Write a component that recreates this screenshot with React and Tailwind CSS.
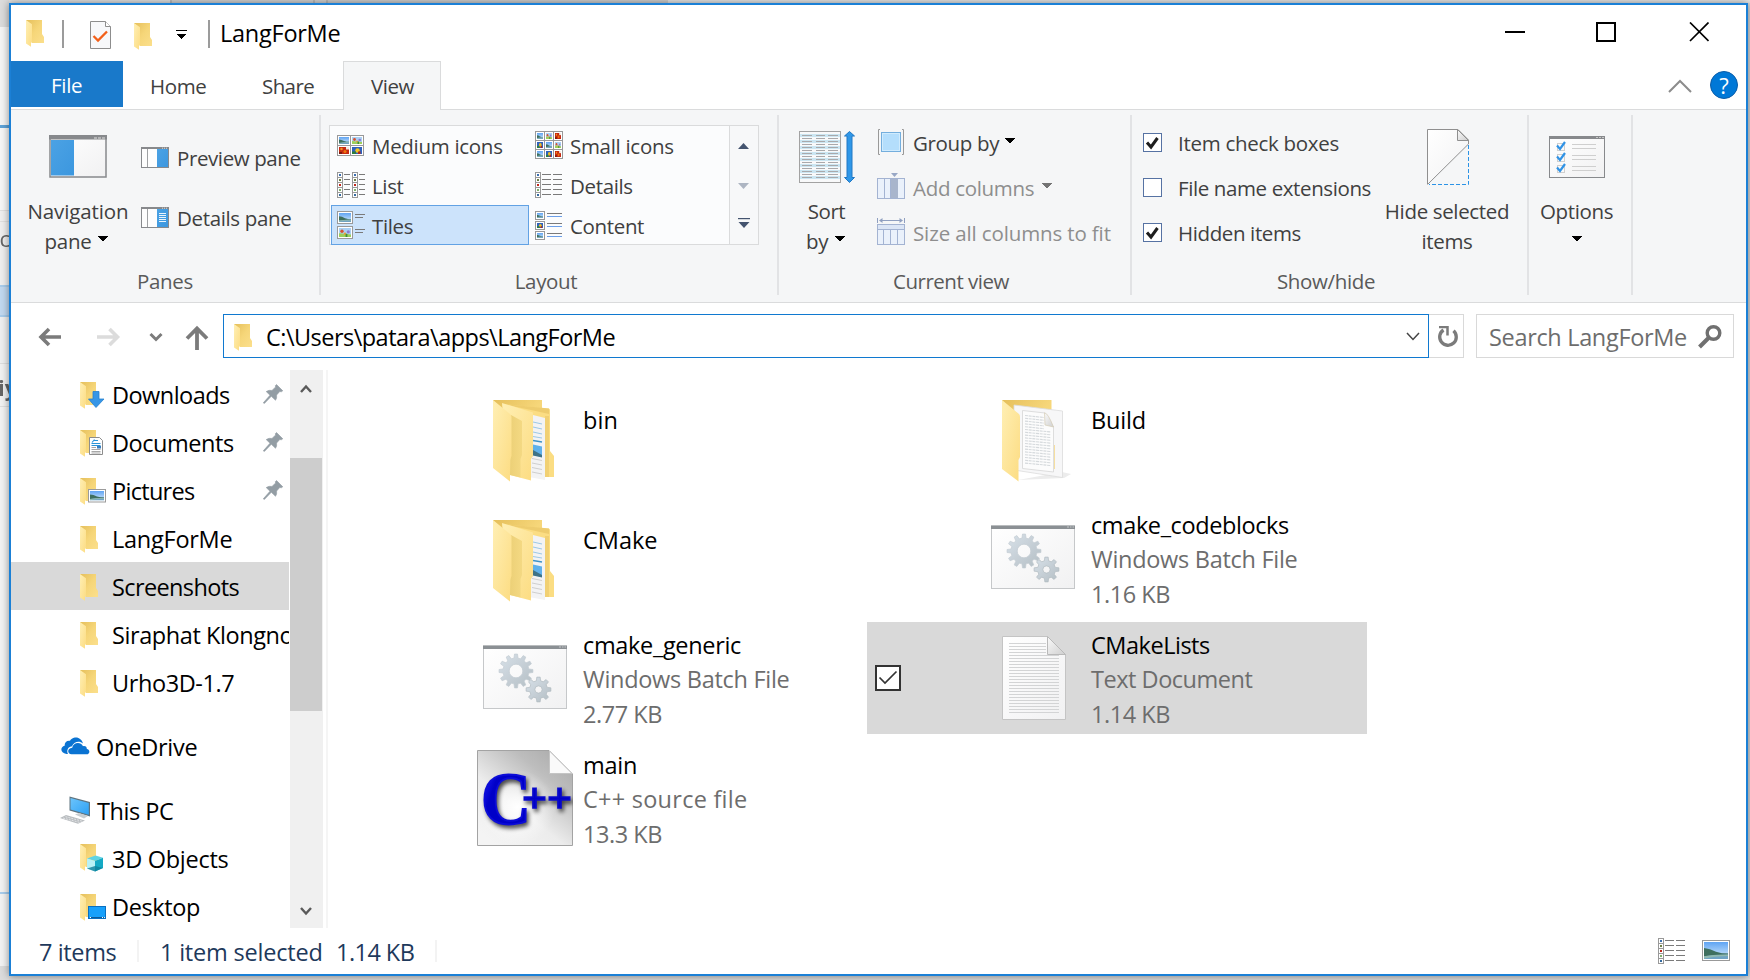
import React from 'react';

/* ---------- shared drawing pieces ---------- */

function Defs() {
  return (
    <svg width="0" height="0" className="absolute">
      <defs>
        <linearGradient id="fBack" x1="0" y1="0" x2="1" y2="1">
          <stop offset="0" stopColor="#e5bf5b" />
          <stop offset="0.5" stopColor="#f6d679" />
          <stop offset="1" stopColor="#fbdf8c" />
        </linearGradient>
        <linearGradient id="fFront" x1="0" y1="0" x2="1" y2="1">
          <stop offset="0" stopColor="#ffefb4" />
          <stop offset="1" stopColor="#fcdc82" />
        </linearGradient>
        <linearGradient id="fInner" x1="0" y1="0" x2="1" y2="0">
          <stop offset="0" stopColor="#ecd077" />
          <stop offset="1" stopColor="#f4d983" />
        </linearGradient>
        <linearGradient id="paper" x1="0" y1="0" x2="1" y2="1">
          <stop offset="0" stopColor="#ffffff" />
          <stop offset="1" stopColor="#f1f1f2" />
        </linearGradient>
        <linearGradient id="fold" x1="0" y1="0" x2="1" y2="1">
          <stop offset="0" stopColor="#fafafa" />
          <stop offset="1" stopColor="#cfcfcf" />
        </linearGradient>
        <linearGradient id="sky" x1="0" y1="0" x2="0" y2="1">
          <stop offset="0" stopColor="#5fa4f3" />
          <stop offset="1" stopColor="#d9ecfb" />
        </linearGradient>
        <linearGradient id="gear" x1="0" y1="0" x2="1" y2="1">
          <stop offset="0" stopColor="#d8e1e9" />
          <stop offset="1" stopColor="#b4bec4" />
        </linearGradient>
        <linearGradient id="blueBar" x1="0" y1="0" x2="1" y2="1">
          <stop offset="0" stopColor="#4ba2e4" />
          <stop offset="1" stopColor="#3c97df" />
        </linearGradient>
        <linearGradient id="screen" x1="0" y1="0" x2="1" y2="1">
          <stop offset="0" stopColor="#6cc4fb" />
          <stop offset="1" stopColor="#2da1f5" />
        </linearGradient>
        <linearGradient id="cppPage" x1="1" y1="0" x2="0.2" y2="1">
          <stop offset="0" stopColor="#a6a6a6" />
          <stop offset="0.3" stopColor="#bdbdbd" />
          <stop offset="0.65" stopColor="#ececec" />
          <stop offset="1" stopColor="#f4f4f4" />
        </linearGradient>
        <radialGradient id="cppGlow" cx="0.42" cy="0.6" r="0.4">
          <stop offset="0" stopColor="#ffffff" />
          <stop offset="1" stopColor="#ffffff" stopOpacity="0" />
        </radialGradient>
        <linearGradient id="cppInk" x1="0" y1="0" x2="0.35" y2="0.2">
          <stop offset="0" stopColor="#7a7aff" />
          <stop offset="0.6" stopColor="#1212e6" />
          <stop offset="1" stopColor="#0000c8" />
        </linearGradient>
      </defs>
    </svg>
  );
}

function Scene({ x, y, w, h, kind = 'lake' }) {
  return (
    <svg x={x} y={y} width={w} height={h} viewBox="0 0 20 14" preserveAspectRatio="none">
      {kind === 'lake' && (
        <>
          <rect width="20" height="14" fill="url(#sky)" />
          <rect y="9.5" width="20" height="4.5" fill="#6fa3c4" />
          <path d="M0 5 L5 6 L10 8 L15 9.3 L20 9.5 L20 10.2 L8 10.8 L0 11.8 Z" fill="#3e6f5e" />
          <path d="M0 11.8 L8 10.8 L20 10.2 L20 11.5 L9 12.2 L0 13.5 Z" fill="#8fb8ae" />
        </>
      )}
      {kind === 'flowers' && (
        <>
          <rect width="20" height="14" fill="#a9d0f4" />
          <path d="M0 8 L8 9 L20 10 V14 H0 Z" fill="#9fcf5a" />
          <circle cx="5" cy="5" r="2.800" fill="#d9512f" />
          <circle cx="10" cy="9" r="2" fill="#e9a03c" />
          <circle cx="15.500" cy="6" r="2.600" fill="#8f7bd0" />
          <rect x="11" y="9" width="3" height="5" fill="#3f8f3a" />
        </>
      )}
      {kind === 'red' && (
        <>
          <rect width="20" height="14" fill="#c62a12" />
          <circle cx="5" cy="4" r="2.500" fill="#f3941f" />
          <circle cx="12" cy="9" r="3" fill="#f0780f" />
          <rect x="14" y="0" width="6" height="5" fill="#f6e9e0" />
          <rect x="0" y="10" width="6" height="4" fill="#7c1b0e" />
        </>
      )}
      {kind === 'dark' && (
        <>
          <rect width="20" height="14" fill="#2f62bd" />
          <circle cx="11" cy="7" r="4.500" fill="#f1c21f" />
          <rect x="0" y="9" width="8" height="5" fill="#2d7d3d" />
          <rect x="12" y="9" width="5" height="5" fill="#b3261a" />
        </>
      )}
    </svg>
  );
}

const Caret = ({ className = 'text-black' }) => (
  <svg width="10" height="5" viewBox="0 0 10 5" className={className} shapeRendering="crispEdges">
    <path d="M0 0 H10 L5.600 5 H4.400 Z" fill="currentColor" />
  </svg>
);

/* ---------- small icons ---------- */

function FolderBase() {
  return (
    <>
      <path d="M0 0 H16 V14 L18 17 V23 H6 Z" fill="url(#fBack)" />
      <path d="M0 0 L6 4.300 V22 L5 23 V26.700 L0 23.500 Z" fill="url(#fFront)" />
    </>
  );
}

function FolderIcon({ kind }) {
  return (
    <svg width="28" height="28" viewBox="0 0 28 28">
      <FolderBase />
      {kind === 'down' && (
        <path d="M13 9.500 H19 V17 H24 L16 25.500 L8.500 17 H13 Z" fill="#3796e6" stroke="#2480cf" strokeWidth="0.800" />
      )}
      {kind === 'doc' && (
        <g>
          <path d="M9.500 7.500 H19.500 L22.500 10.500 V24.500 H9.500 Z" fill="#fff" stroke="#8d8d8d" />
          <path d="M12 12.500 L14.500 9.500 M14 10.500 H18 M11.500 13.500 H20.500 M11.500 15.500 H20.500" stroke="#2a94d8" strokeWidth="1.100" />
          <path d="M11.500 17.500 H16 M11.500 19.500 H20.500 M11.500 21.500 H20.500 M11.500 23 H20.500" stroke="#9d9d9d" strokeWidth="0.900" />
          <rect x="17" y="16" width="4" height="2.500" fill="#3b7fc0" />
        </g>
      )}
      {kind === 'pic' && (
        <g>
          <rect x="8.500" y="11.500" width="17" height="12.500" fill="#fff" stroke="#9b9b9b" />
          <Scene x="10" y="13" w="14" h="9.500" />
        </g>
      )}
      {kind === '3d' && (
        <g>
          <path d="M7 14.500 L15.500 11.500 L23 13.800 L15 17 Z" fill="#5fd3e4" />
          <path d="M7 14.500 L15 17 V27.500 L7 24.500 Z" fill="#b8f1f6" />
          <path d="M15 17 L23 13.800 V24 L15 27.500 Z" fill="#14a9c4" />
          <path d="M7 24.500 L15 22 L23 24 L15 27.500 Z" fill="#0b7f9b" opacity="0.800" />
        </g>
      )}
      {kind === 'desk' && (
        <g>
          <rect x="8.500" y="12.500" width="17" height="12" fill="#17a0fb" stroke="#0a6fc0" />
          <path d="M10 23.500 H24" stroke="#0c5a99" />
          <path d="M10 23.500 h1 M22 23.500 h1 M24 23.500 h0.800" stroke="#fff" />
        </g>
      )}
    </svg>
  );
}

const Pin = () => (
  <svg width="20" height="20" viewBox="0 0 20 20">
    <path d="M13.500 0.500 L19.800 6.800 L18.300 7.800 L16.800 7.500 L13.600 11 Q14.200 14.300 12.500 16.300 L8.300 12.300 L1.300 19.600 L0.300 18.800 L7 11.200 L3.200 7.600 Q6 5.700 9 6.400 L12.600 3 L12.300 1.700 Z" fill="#939da4" stroke="#939da4" strokeWidth="0.600" />
  </svg>
);

const OneDrive = () => (
  <svg width="29" height="18" viewBox="0 0 29 18">
    <path d="M5.500 17 H7 C5 13.500 7.500 9.500 11 9.300 C12.500 5 18 3.200 22 6.500 C21 2.500 17.500 0 13.800 0.600 C11.500 1 10 2.300 9 3.800 C5.500 3.300 3.300 6 3.700 8.800 C-1.200 10 -0.800 16.500 5.500 17 Z" fill="#0a73d2" />
    <path d="M10.500 17.300 C6 17 6 11 11.200 10.700 C12 5.500 19.500 4 22 9.200 C25 8.700 26 10.600 25.800 12 C29.500 12.500 29 17.300 25.500 17.300 Z" fill="#0a73d2" />
  </svg>
);

const ThisPC = () => (
  <svg width="31" height="28" viewBox="0 0 31 28">
    <path d="M9.500 0.500 L30 6 V20.500 L9.500 14.500 Z" fill="#5e7480" />
    <path d="M10.500 2 L28.800 6.900 V18.800 L10.500 13.600 Z" fill="url(#screen)" />
    <path d="M15 18.500 L19 17 L28 20 L24 22.500 Z" fill="#c9ced1" />
    <path d="M0 22 L6 19 L25 24.500 L18 27.800 Z" fill="#b9bdc0" />
    <path d="M3 22 L20 26.500 M5.500 20.700 L22.500 25.300" stroke="#e6e8ea" strokeWidth="0.900" strokeDasharray="2 1" />
  </svg>
);

function PaneIcon({ lines }) {
  return (
    <svg width="28" height="21" viewBox="0 0 28 21">
      <rect x="0.500" y="0.500" width="27" height="20" fill="#fdfdfd" stroke="#87898c" />
      <rect width="28" height="2" fill="#87898c" />
      <path d="M21 1.200 h5" stroke="#dcdcdc" strokeDasharray="1 1" />
      <path d="M6.500 2 V20" stroke="#9fa1a3" />
      <rect x="16" y="2" width="11" height="18" fill="url(#blueBar)" />
      {lines && <path d="M18 6.500 H25 M18 8.500 H25 M18 10.500 H25 M18 12.500 H25 M18 14.500 H25" stroke="#fff" strokeWidth="0.900" />}
    </svg>
  );
}

const MediumIcons = () => (
  <svg width="28" height="21" viewBox="0 0 28 21">
    <rect x="0.500" y="0.500" width="26" height="20" fill="#fff" stroke="#999" />
    <path d="M13.500 0 V21 M0 10.500 H27" stroke="#999" />
    <Scene x="2" y="2" w="10" h="7" />
    <Scene x="15" y="2" w="10" h="7" kind="flowers" />
    <Scene x="2" y="12" w="10" h="7" kind="red" />
    <Scene x="15" y="12" w="10" h="7" kind="dark" />
  </svg>
);

const SMALL_KINDS = ['lake', 'flowers', 'red', 'dark', 'lake', 'flowers', 'lake', 'dark', 'red'];
const SmallIcons = () => (
  <svg width="28" height="28" viewBox="0 0 28 28">
    <rect x="0.500" y="0.500" width="27" height="27" fill="#fff" stroke="#999" />
    <path d="M9.500 0 V28 M18.500 0 V28 M0 9.500 H28 M0 18.500 H28" stroke="#999" />
    {SMALL_KINDS.map((k, i) => (
      <Scene key={i} x={2 + (i % 3) * 9} y={2 + Math.floor(i / 3) * 9} w="6" h="6" kind={k} />
    ))}
  </svg>
);

const DOTS = ['#3b6fb0', '#6e7f45', '#c0281c', '#7eaf6a', '#356b9f'];
function Strip({ x }) {
  return (
    <g>
      <rect x={x + 0.5} y="0.500" width="5" height="25" fill="#fff" stroke="#999" />
      {DOTS.map((c, i) => (
        <g key={i}>
          <rect x={x + 2} y={2 + i * 5} width="2" height="2" fill={c} />
          {i > 0 && <path d={`M${x} ${i * 5 + 0.5} h6`} stroke="#999" />}
        </g>
      ))}
    </g>
  );
}
const ListIcon = () => (
  <svg width="28" height="26" viewBox="0 0 28 26">
    <Strip x={0} />
    <Strip x={15} />
    <path d="M7 2.500 h6 M7 7.500 h6 M7 12.500 h6 M7 17.500 h6 M7 22.500 h6 M22 2.500 h6 M22 7.500 h6 M22 12.500 h6 M22 17.500 h6 M22 22.500 h6" stroke="#7a7a7a" />
  </svg>
);
const DetailsIcon = () => (
  <svg width="28" height="26" viewBox="0 0 28 26">
    <Strip x={0} />
    <path d="M7 2.500 h9 M7 7.500 h9 M7 12.500 h9 M7 17.500 h9 M7 22.500 h9 M18 2.500 h9 M18 7.500 h9 M18 12.500 h9 M18 17.500 h9 M18 22.500 h9" stroke="#7a7a7a" />
  </svg>
);
const TilesIcon = () => (
  <svg width="28" height="28" viewBox="0 0 28 28">
    <rect x="0.500" y="0.500" width="15" height="12" fill="#fff" stroke="#999" />
    <rect x="0.500" y="15.500" width="15" height="12" fill="#fff" stroke="#999" />
    <Scene x="2" y="2" w="12" h="9" />
    <Scene x="2" y="17" w="12" h="9" kind="flowers" />
    <path d="M18 3.500 h10 M18 6.500 h8 M18 18.500 h10 M18 21.500 h8" stroke="#7a7a7a" />
  </svg>
);
const ContentIcon = () => (
  <svg width="28" height="29" viewBox="0 0 28 29">
    {[0, 1, 2].map((i) => (
      <g key={i}>
        <rect x="0.500" y={0.5 + i * 10} width="9" height="8" fill="#fff" stroke="#999" />
        <Scene x="2" y={2 + i * 10} w="6" h="5" kind={i === 1 ? 'dark' : 'lake'} />
        <path d={`M12 ${2.5 + i * 10} h15`} stroke="#7a7a7a" />
        <path d={`M12 ${5.5 + i * 10} h15`} stroke="#6c9fe8" />
      </g>
    ))}
  </svg>
);

/* ---------- large ribbon icons ---------- */

const NavPaneIcon = () => (
  <svg width="58" height="43" viewBox="0 0 58 43">
    <rect x="1" y="1" width="56" height="41" fill="url(#paper)" stroke="#87898c" strokeWidth="1.500" />
    <rect width="58" height="4.500" fill="#87898c" />
    <path d="M45 3 h3 M49 3 h3 M53 3 h3" stroke="#c4c4c4" strokeWidth="1.500" />
    <rect x="2" y="5" width="23" height="35.500" fill="url(#blueBar)" />
  </svg>
);

const SortIcon = () => (
  <svg width="56" height="52" viewBox="0 0 56 52">
    <rect x="0.500" y="0.500" width="41" height="51" fill="#f8f9fa" stroke="#a2a2a2" />
    {[2, 8, 14, 20, 26, 32, 38, 44].map((y) => (
      <rect key={y} x="1" y={y + 1} width="40" height="3" fill="#cbe6f2" />
    ))}
    {Array.from({ length: 15 }, (_, i) => (
      <path key={i} d={`M3 ${4.5 + i * 3} h10 M17 ${4.5 + i * 3} h9 M29 ${4.5 + i * 3} h10`} stroke="#a9a9ab" strokeWidth="1" />
    ))}
    <path d="M50.500 0.500 L55.500 5 H53 V46.500 H55.500 L50.500 51.500 L45.500 46.500 H48 V5 H45.500 Z" fill="#2f97e8" stroke="#2278c4" />
  </svg>
);

const GroupIcon = () => (
  <svg width="28" height="27" viewBox="0 0 28 27">
    <path d="M3 0.500 H1.500 V25.500 H3 M25 0.500 H26.500 V25.500 H25" fill="none" stroke="#999" />
    <rect x="4.500" y="3.500" width="19" height="19" fill="#b4defc" stroke="#74aedd" />
    <rect x="5.500" y="4.500" width="17" height="17" fill="none" stroke="#d0ebfd" />
  </svg>
);
const AddColIcon = () => (
  <svg width="28" height="26" viewBox="0 0 28 26">
    <rect x="0.500" y="5.500" width="27" height="20" fill="#eaf1fb" stroke="#a3b3d2" />
    <path d="M7.500 5 V26 M13.500 5 V26 M20.500 5 V26" stroke="#a3b3d2" />
    <rect x="14" y="6" width="7" height="19" fill="#a8b5cc" />
    <path d="M14 0 H21 L17.500 4 Z" fill="#98a7c5" />
  </svg>
);
const SizeColIcon = () => (
  <svg width="28" height="27" viewBox="0 0 28 27">
    <path d="M0.500 0 V5 M27.500 0 V5" stroke="#8f9fc0" />
    <path d="M4 2.500 H24" stroke="#8f9fc0" />
    <path d="M2 2.500 L5.500 0 V5 Z M26 2.500 L22.500 0 V5 Z" fill="#8f9fc0" />
    <rect x="0.500" y="6.500" width="27" height="20" fill="#eaf1fb" stroke="#a3b3d2" />
    <rect x="1" y="7" width="26" height="4" fill="#dbe5f5" />
    <path d="M0 11.500 H28 M6.500 11.500 V26 M13.500 11.500 V26 M20.500 11.500 V26" stroke="#a3b3d2" />
  </svg>
);

const HideIcon = () => (
  <svg width="42" height="56" viewBox="0 0 42 56">
    <path d="M0.500 55 V0.500 H31 L41.500 11 V15 L0.500 55.500" fill="url(#paper)" stroke="#8f8f8f" />
    <path d="M30.500 0.500 V11.500 H41.500 Z" fill="url(#fold)" stroke="#8f8f8f" />
    <path d="M41.500 16 V55.500 H2" fill="none" stroke="#2b93e6" strokeDasharray="4 2" />
  </svg>
);

const OptionsIcon = () => (
  <svg width="56" height="42" viewBox="0 0 56 42">
    <rect x="0.500" y="0.500" width="55" height="41" fill="url(#paper)" stroke="#87898c" />
    <rect width="56" height="3" fill="#87898c" />
    <path d="M47 1.500 h2 M50 1.500 h2 M53 1.500 h2" stroke="#c8c8c8" />
    {[0, 11, 22].map((y) => (
      <g key={y}>
        <rect x="8.500" y={7.5 + y} width="7" height="7" fill="#fafafa" stroke="#cfcfcf" />
        <path d={`M8 ${9.5 + y} l3 3.500 l5 -7`} fill="none" stroke="#3093e6" strokeWidth="2.200" />
        <path d={`M23 ${8.5 + y} h24 M23 ${12.5 + y} h24`} stroke="#cfcfcf" />
      </g>
    ))}
  </svg>
);

/* ---------- file icons ---------- */

function gearPath(cx, cy, ro, ri, n) {
  const pts = [];
  const step = (Math.PI * 2) / n;
  for (let i = 0; i < n; i++) {
    const a = i * step - Math.PI / 2;
    [[-0.3, ri], [-0.17, ro], [0.17, ro], [0.3, ri]].forEach(([k, r]) => {
      pts.push(`${(cx + r * Math.cos(a + k * step)).toFixed(2)} ${(cy + r * Math.sin(a + k * step)).toFixed(2)}`);
    });
  }
  return `M${pts.join('L')}Z`;
}
const ring = (cx, cy, r) => `M${cx - r} ${cy}a${r} ${r} 0 1 0 ${2 * r} 0a${r} ${r} 0 1 0 ${-2 * r} 0Z`;
const BIG_GEAR = gearPath(33, 26, 17, 13, 12) + ring(33, 26, 6.8);
const SMALL_GEAR = gearPath(55.5, 44.5, 12.5, 9, 8) + ring(55.5, 44.5, 3.6);

const BatchIcon = () => (
  <svg width="84" height="64" viewBox="0 0 84 64" className="-mt-[2px]">
    <rect x="0.500" y="0.500" width="83" height="63" fill="url(#paper)" stroke="#c6c8ca" />
    <rect width="84" height="4" fill="#8b9094" />
    <rect width="84" height="1" fill="#b9bcbe" />
    <path d="M76 2 h2 M79 2 h1.500 M81.500 2 h1.500" stroke="#c3c6c8" />
    <path d={BIG_GEAR} fill="url(#gear)" stroke="#c3ccd2" strokeWidth="0.700" fillRule="evenodd" />
    <path d={SMALL_GEAR} fill="url(#gear)" stroke="#b0bac0" strokeWidth="0.700" fillRule="evenodd" />
  </svg>
);

const FolderFull = () => (
  <svg width="62" height="82" viewBox="0 0 62 82" className="-ml-[2px] mt-[6px]">
    <path d="M0 0 H49 V60 H10 Z" fill="url(#fBack)" />
    <path d="M9 4 L56 8.500 Q57 9 57 10 V51 L61 56 V77 L52 77 L20 60 Z" fill="#fbdd83" />
    <path d="M9 4 L56 8.500 L56 14 L38 10 Z" fill="#e8c565" opacity="0.700" />
    <path d="M36 14 L52 18 V80 L36 77 Z" fill="#f3f3f4" />
    <path d="M52 16 L56 16 V77 H52 Z" fill="#ecca6d" opacity="0.700" />
    <path d="M40 22 L49 24 M40 27 L49 29 M40 32 L49 34 M40 36.500 L49 38" stroke="#9cc8e6" />
    <path d="M40 40.500 L49 42" stroke="#3d93c9" strokeWidth="1.300" />
    <path d="M40 44.500 L49 46.500 V57 L40 55 Z" fill="#5fb0ea" />
    <path d="M40 50 L49 55 V57.500 L40 55.500 Z" fill="#3f7386" />
    <path d="M39 58.500 L49 60.500 M39 63 L49 65 M39 67.500 L49 69.500 M39 72 L49 74" stroke="#cfcfcf" />
    <path d="M9 3 L40 12.500 V56 L38 59 V80.500 L17 75 Z" fill="url(#fFront)" />
    <path d="M18 15 L29 21 V55 L27.500 59 V77.500 L17 75 Z" fill="url(#fInner)" />
    <path d="M0 0 L17 14 Q18.500 15 18.500 17 V56 L17 60 V81.500 L0 68 Z" fill="url(#fFront)" />
  </svg>
);

const FolderPages = () => (
  <svg width="70" height="82" viewBox="0 0 70 82" className="ml-[8px] mt-[6px]">
    <path d="M16 80 L62 78 L69 74 L60 72 Z" fill="#ececec" />
    <path d="M0 0 H49.500 V60 H10 Z" fill="url(#fBack)" />
    <path d="M12 5 L60.500 11 V77.500 L12 70 Z" fill="#f7f7f8" stroke="#dcdcdc" strokeWidth="0.800" />
    <path d="M20.500 10.500 L43 13 L51.500 27 V72 L20.500 68.500 Z" fill="#fcfcfc" stroke="#d6d6d6" strokeWidth="0.800" />
    {Array.from({ length: 18 }, (_, i) => (
      <path key={i} d={`M23 ${15.5 + i * 2.8} L${i < 5 ? 42 : 49} ${(i < 5 ? 17.5 : 18) + i * 2.8}`} stroke="#d5d9dc" strokeWidth="1.100" strokeDasharray="3 0.700" />
    ))}
    <path d="M42.500 12.800 Q46 13 51.500 27 L43 25 Z" fill="url(#fold)" stroke="#d4cbb4" strokeWidth="0.700" />
    <path d="M52.500 45 V69" stroke="#f6dfa0" />
    <path d="M0 0 L17 14 Q18 15 18 17 V57 L16.500 60 V81.500 L0 69 Z" fill="url(#fFront)" />
  </svg>
);

const TextIcon = () => (
  <svg width="64" height="84" viewBox="0 0 64 84" className="ml-[1px]">
    <path d="M0.500 0.500 H45 L63.500 18.500 V83.500 H0.500 Z" fill="url(#paper)" stroke="#c4c4c4" />
    {Array.from({ length: 24 }, (_, i) => (
      <path key={i} d={`M7 ${7.5 + i * 3} H${i < 4 ? 44 : 57}`} stroke="#d3d4d5" />
    ))}
    <path d="M45.500 0.500 V18.500 H63.500 Z" fill="url(#fold)" stroke="#b9b9b9" />
  </svg>
);

const CppIcon = () => (
  <svg width="96" height="96" viewBox="0 0 96 96">
    <path d="M0.500 0.500 H72 L95.500 24 V95.500 H0.500 Z" fill="url(#cppPage)" stroke="#a3a3a3" />
    <rect x="1" y="1" width="94" height="94" fill="url(#cppGlow)" />
    <path d="M72.500 1 V23.500 H95 Z" fill="#fafafa" stroke="#c4c4c4" />
    <g style={{ filter: 'drop-shadow(2px 3px 2px rgba(0,0,0,0.7))' }} fill="url(#cppInk)" fontFamily="Liberation Serif, serif" fontWeight="700">
      <text x="4" y="74" fontSize="75" textLength="50" lengthAdjust="spacingAndGlyphs" stroke="#0c0cd8" strokeWidth="2">C</text>
      <text x="45" y="61.500" fontSize="42" textLength="50" lengthAdjust="spacingAndGlyphs" stroke="#0808cc" strokeWidth="1.600">++</text>
    </g>
  </svg>
);

/* ---------- window parts ---------- */

function TitleBar() {
  return (
    <div className="flex h-[56px] shrink-0 items-start">
      <div className="ml-[15px] mt-[15px] w-[28px]"><FolderIcon /></div>
      <div className="ml-[8px] mt-[15px] h-[28px] w-[2px] bg-[#9b9b9b]" />
      <svg className="ml-[26px] mt-[16px]" width="21" height="28" viewBox="0 0 21 28">
        <path d="M0.500 0.500 H15.500 L20.500 5.500 V27.500 H0.500 Z" fill="#f7f8fa" stroke="#8d8d8d" />
        <path d="M15.500 0.500 V5.500 H20.500" fill="#fff" stroke="#8d8d8d" />
        <path d="M3.500 15 L8 19.500 L17 10.500" fill="none" stroke="#f2601a" strokeWidth="2.300" />
      </svg>
      <div className="ml-[23px] mt-[18px] w-[28px]"><FolderIcon /></div>
      <svg className="ml-[14px] mt-[25px]" width="11" height="9" viewBox="0 0 11 9" shapeRendering="crispEdges">
        <rect width="11" height="1" fill="#000" />
        <path d="M1 4 H10 L6 9 H5 Z" fill="#000" />
      </svg>
      <div className="ml-[21px] mt-[15px] h-[28px] w-[2px] bg-[#9b9b9b]" />
      <div className="ml-[10px] text-[23.5px] leading-[57px] tracking-[-0.25px] text-black">LangForMe</div>
      <div className="flex-1" />
      <svg className="mt-[17px]" width="204" height="20" viewBox="0 0 204 20" fill="none" stroke="#000" strokeWidth="2">
        <path d="M0 10 H20" />
        <rect x="92" y="1" width="18" height="18" />
        <path d="M185 0.500 L203.500 19 M203.500 0.500 L185 19" strokeWidth="1.700" />
      </svg>
      <div className="w-[37px]" />
    </div>
  );
}

function Tabs() {
  return (
    <div className="flex h-[49px] shrink-0 border-b border-[#dadbdc] text-[20.5px] text-[#404040]">
      <div className="h-[46px] w-[112px] bg-[#1979ca] pl-[40px] leading-[49px] tracking-[-0.3px] text-white">File</div>
      <div className="w-[109px] pl-[27px] leading-[51px] tracking-[-0.4px]">Home</div>
      <div className="w-[111px] pl-[30px] leading-[51px] tracking-[-0.6px]">Share</div>
      <div className="h-[49px] w-[98px] border-x border-t border-[#dadbdc] bg-[#f5f6f7] pl-[27px] leading-[48px] tracking-[-0.5px]">View</div>
      <div className="flex-1" />
      <svg className="mt-[18px]" width="24" height="15" viewBox="0 0 24 15" fill="none" stroke="#8c8c8c" strokeWidth="2">
        <path d="M1 13 L12 2 L23 13" />
      </svg>
      <div className="ml-[18px] mr-[8px] mt-[10px] flex h-[28px] w-[28px] items-center justify-center rounded-full border border-[#0a5ca8] bg-[#0078d7] text-[22px] font-medium leading-none text-white">?</div>
    </div>
  );
}

const Divider = () => <div className="mt-[5px] h-[180px] w-[2px] shrink-0 bg-[#e2e3e5]" />;

function Group({ width, label, labelClass = '', children }) {
  return (
    <div className={`flex shrink-0 flex-col ${width}`}>
      <div className="flex h-[154px]">{children}</div>
      <div className={`text-center leading-[34px] text-[#5a5a5a] ${labelClass}`}>{label}</div>
    </div>
  );
}

function BigButton({ icon, iconPad, width, lines }) {
  return (
    <div className={`flex shrink-0 flex-col items-center ${width}`}>
      <div className={`h-[86px] ${iconPad}`}>{icon}</div>
      {lines.map((l, i) => (
        <div key={i} className="flex h-[30px] items-center gap-[7px] leading-[30px]">{l}</div>
      ))}
    </div>
  );
}

const LiftedCaret = () => <span className="mb-[5px] flex"><Caret /></span>;

function GalleryItem({ icon, label, active, spacing }) {
  return (
    <div className={`flex h-[40px] w-[198px] items-center border pl-[5px] ${active ? 'border-[#62a2e4] bg-[#cce3fb]' : 'border-transparent'}`}>
      <div className="w-[28px]">{icon}</div>
      <div className={`ml-[7px] pt-[2px] ${spacing}`}>{label}</div>
    </div>
  );
}

function Check({ on, label, spacing }) {
  return (
    <div className="flex h-[45px] items-center">
      <div className="h-[19px] w-[19px] border border-[#5672a3] bg-white">
        {on && (
          <svg width="17" height="17" viewBox="0 0 17 17" className="block">
            <path d="M3 8.500 L7 13 L13.500 4" fill="none" stroke="#1e1e1e" strokeWidth="3" />
          </svg>
        )}
      </div>
      <div className={`ml-[16px] pt-[2px] ${spacing}`}>{label}</div>
    </div>
  );
}

function Ribbon() {
  return (
    <div className="flex h-[193px] shrink-0 whitespace-nowrap border-b border-[#dadbdc] bg-[#f5f6f7] text-[20.5px] tracking-[-0.35px] text-[#404040]">
      <Group width="w-[308px]" label="Panes">
        <BigButton
          width="w-[114px] ml-[10px]"
          iconPad="pt-[25px]"
          icon={<NavPaneIcon />}
          lines={[<span className="tracking-[-0.1px]">Navigation</span>, <><span className="-ml-[3px] tracking-[-0.3px]">pane</span><LiftedCaret /></>]}
        />
        <div className="ml-[6px] mt-[18px]">
          <div className="flex h-[60px] items-center"><span className="mb-[2px]"><PaneIcon /></span><span className="ml-[8px] tracking-[-0.4px]">Preview pane</span></div>
          <div className="flex h-[60px] items-center"><span className="mb-[2px]"><PaneIcon lines /></span><span className="ml-[8px]">Details pane</span></div>
        </div>
      </Group>
      <Divider />
      <Group width="w-[456px]" label="Layout" labelClass="pr-[6px]">
        <div className="ml-[8px] mt-[15px] flex h-[120px] w-[430px] border border-[#dadbdc] bg-[#fbfcfd]">
          <div className="-mt-px ml-[1px] grid w-[396px] shrink-0 grid-cols-2">
            <GalleryItem icon={<MediumIcons />} label="Medium icons" spacing="tracking-[-0.3px]" />
            <GalleryItem icon={<SmallIcons />} label="Small icons" spacing="tracking-[-0.3px]" />
            <GalleryItem icon={<ListIcon />} label="List" />
            <GalleryItem icon={<DetailsIcon />} label="Details" />
            <GalleryItem icon={<TilesIcon />} label="Tiles" active />
            <GalleryItem icon={<ContentIcon />} label="Content" />
          </div>
          <div className="ml-[2px] flex-1 border-l border-[#dadbdc] bg-[#f7f8f9]">
            <svg width="27" height="118" viewBox="0 0 27 118" fill="#44546f">
              <path d="M8 23 L13.500 17 L19 23 Z" />
              <path d="M8 57 H19 L13.500 63 Z" fill="#adb5c2" />
              <rect x="8" y="92" width="12" height="1.200" />
              <path d="M8.500 96 H19.500 L14 102 Z" />
            </svg>
          </div>
        </div>
      </Group>
      <Divider />
      <Group width="w-[351px]" label="Current view" labelClass="pr-[7px] tracking-[-0.5px]">
        <BigButton
          width="w-[56px] ml-[20px]"
          iconPad="pt-[21px]"
          icon={<SortIcon />}
          lines={[<span className="-ml-px tracking-[-0.5px]">Sort</span>, <><span className="-ml-[3px]">by</span><LiftedCaret /></>]}
        />
        <div className="ml-[22px] mt-[10px] text-[#8e8e8e]">
          <div className="flex h-[45px] items-center text-[#404040]"><GroupIcon /><span className="ml-[8px] pt-[2px]">Group by</span><span className="mb-[4px] ml-[6px] flex"><Caret /></span></div>
          <div className="flex h-[45px] items-center"><span className="mb-[3px]"><AddColIcon /></span><span className="ml-[8px] pt-[2px] tracking-[-0.3px]">Add columns</span><span className="mb-[4px] ml-[8px] flex"><Caret className="text-[#747474]" /></span></div>
          <div className="flex h-[45px] items-center"><span className="mb-[3px]"><SizeColIcon /></span><span className="ml-[8px] pt-[2px] tracking-[-0.13px]">Size all columns to fit</span></div>
        </div>
      </Group>
      <Divider />
      <Group width="w-[395px]" label="Show/hide" labelClass="pr-[7px]">
        <div className="ml-[11px] mt-[10px] w-[236px]">
          <Check on label="Item check boxes" spacing="tracking-[-0.29px]" />
          <Check label="File name extensions" spacing="tracking-[-0.39px]" />
          <Check on label="Hidden items" spacing="tracking-[-0.38px]" />
        </div>
        <BigButton
          width="w-[138px] -ml-px"
          iconPad="pt-[19px] pl-[2px]"
          icon={<HideIcon />}
          lines={['Hide selected', 'items']}
        />
      </Group>
      <Divider />
      <Group width="w-[102px]" label="">
        <BigButton width="w-[95px]" iconPad="pt-[26px]" icon={<OptionsIcon />} lines={['Options', <LiftedCaret />]} />
      </Group>
      <Divider />
    </div>
  );
}

function AddressRow() {
  return (
    <div className="flex h-[67px] shrink-0 items-start pt-[11px] text-[23.5px] text-black">
      <svg width="212" height="44" viewBox="0 0 212 44" fill="none" stroke="#7b7b7b" strokeWidth="4">
        <path d="M50 23 H29 M38 15 L30 23 L38 31" strokeWidth="3.600" />
        <path d="M86 23 H107 M98.500 15 L106.500 23 L98.500 31" stroke="#dcdcdc" strokeWidth="3.600" />
        <path d="M139.500 20 L145 25.500 L150.500 20" strokeWidth="3" />
        <path d="M186 36 V14 M176 24.500 L186 14.500 L196 24.500" strokeWidth="3.800" />
      </svg>
      <div className="flex h-[44px] w-[1206px] border border-[#1079d0] bg-white">
        <div className="ml-[10px] mt-[9px] w-[28px]"><FolderIcon /></div>
        <div className="ml-[4px] flex-1 leading-[45px] tracking-[-0.53px]">C:\Users\patara\apps\LangForMe</div>
        <svg className="mr-[8px] mt-[17px]" width="14" height="9" viewBox="0 0 14 9" fill="none" stroke="#444" strokeWidth="1.500">
          <path d="M1 1 L7 7.500 L13 1" />
        </svg>
      </div>
      <div className="flex h-[44px] w-[35px] border border-l-0 border-[#d9d9d9]">
        <svg className="ml-[8px] mt-[11px]" width="22" height="22" viewBox="0 0 22 22" fill="none" stroke="#7b7b7b">
          <path d="M16.500 4.800 A8.300 8.300 0 1 1 6.500 4" strokeWidth="3.300" />
          <path d="M2 1 H10.500 V9.500" strokeWidth="2.500" />
        </svg>
      </div>
      <div className="ml-[12px] flex h-[44px] w-[258px] border border-[#d9d9d9] text-[#6d6d6d]">
        <div className="ml-[12px] w-[208px] whitespace-nowrap leading-[45px] tracking-[-0.33px]">Search LangForMe</div>
        <svg className="ml-[1px] mt-[10px]" width="24" height="24" viewBox="0 0 24 24" fill="none" stroke="#707070">
          <circle cx="15.500" cy="8" r="6.300" strokeWidth="3.400" />
          <path d="M10.500 13 L1.500 22" strokeWidth="4" />
        </svg>
      </div>
    </div>
  );
}

function SideItem({ kind, label, pinned, active, iconTop = 'mt-[12px]', spacing = 'tracking-[-0.4px]' }) {
  return (
    <div className={`flex h-[48px] w-[278px] shrink-0 overflow-hidden whitespace-nowrap ${active ? 'bg-[#d9d9d9]' : ''}`}>
      <div className={`ml-[69px] w-[28px] shrink-0 ${iconTop}`}><FolderIcon kind={kind} /></div>
      <div className={`ml-[4px] flex-1 leading-[51px] ${spacing}`}>{label}</div>
      {pinned && <div className="mr-[6px] mt-[14px] shrink-0"><Pin /></div>}
    </div>
  );
}

function Sidebar() {
  return (
    <div className="flex h-full w-[279px] flex-col overflow-hidden text-[23.5px] text-black">
      <SideItem kind="down" label="Downloads" pinned spacing="tracking-[-0.54px]" />
      <SideItem kind="doc" label="Documents" pinned spacing="tracking-[-0.45px]" />
      <SideItem kind="pic" label="Pictures" pinned spacing="tracking-[-0.7px]" />
      <SideItem label="LangForMe" spacing="tracking-[-0.25px]" />
      <SideItem label="Screenshots" active spacing="tracking-[-0.62px]" />
      <SideItem label="Siraphat Klongnoi" spacing="tracking-[-0.42px]" />
      <SideItem label="Urho3D-1.7" spacing="tracking-[-0.4px]" />
      <div className="mt-[16px] flex h-[48px] shrink-0">
        <div className="ml-[50px] mt-[15px] w-[29px]"><OneDrive /></div>
        <div className="ml-[6px] leading-[51px] tracking-[-0.25px]">OneDrive</div>
      </div>
      <div className="mt-[16px] flex h-[48px] shrink-0">
        <div className="ml-[49px] mt-[10px] w-[31px]"><ThisPC /></div>
        <div className="ml-[6px] leading-[51px] tracking-[-0.45px]">This PC</div>
      </div>
      <SideItem kind="3d" label="3D Objects" iconTop="mt-[10px]" spacing="tracking-[-0.28px]" />
      <SideItem kind="desk" label="Desktop" />
    </div>
  );
}

function ScrollBar() {
  return (
    <div className="flex w-[33px] shrink-0 flex-col bg-[#f0f0f0]">
      <svg className="ml-[10px] mt-[14px]" width="12" height="10" viewBox="0 0 12 10" fill="none" stroke="#5a5a5a" strokeWidth="2.400">
        <path d="M1 8 L6 2.500 L11 8" />
      </svg>
      <div className="mt-[64px] h-[253px] w-[32px] bg-[#cdcdcd]" />
      <div className="flex-1" />
      <svg className="mb-[12px] ml-[10px]" width="12" height="10" viewBox="0 0 12 10" fill="none" stroke="#5a5a5a" strokeWidth="2.400">
        <path d="M1 2 L6 7.500 L11 2" />
      </svg>
    </div>
  );
}

function Tile({ icon, name, type, size, active, spacing, typeSpacing }) {
  return (
    <div className={`flex h-[112px] w-[500px] ${active ? 'bg-[#d9d9d9]' : ''}`}>
      <div className="w-[118px] shrink-0 pl-[8px] pt-[43px]">
        {active && (
          <div className="h-[26px] w-[26px] border-2 border-[#333] bg-white">
            <svg width="22" height="22" viewBox="0 0 22 22" fill="none" stroke="#333" strokeWidth="1.700">
              <path d="M2.500 10.500 L8 16 L19.500 4.500" />
            </svg>
          </div>
        )}
      </div>
      <div className="mt-[8px] flex h-[96px] w-[96px] shrink-0 items-center justify-center">{icon}</div>
      <div className={`ml-[10px] whitespace-nowrap leading-[34.5px] ${type ? 'pt-[5.5px]' : 'pt-[21px]'}`}>
        <div className={`text-black ${spacing}`}>{name}</div>
        {type && <div className={`text-[#6d6d6d] ${typeSpacing}`}>{type}</div>}
        {size && <div className="tracking-[-0.45px] text-[#6d6d6d]">{size}</div>}
      </div>
    </div>
  );
}

function Files() {
  return (
    <div className="ml-[31px] mt-[12px] grid grid-cols-[500px_500px] content-start gap-x-[8px] gap-y-[8px] text-[23.5px]">
      <Tile icon={<FolderFull />} name="bin" spacing="tracking-[0.1px]" />
      <Tile icon={<FolderPages />} name="Build" spacing="tracking-[-0.2px]" />
      <Tile icon={<FolderFull />} name="CMake" />
      <Tile icon={<BatchIcon />} name="cmake_codeblocks" type="Windows Batch File" size="1.16 KB" spacing="tracking-[-0.39px]" typeSpacing="tracking-[-0.29px]" />
      <Tile icon={<BatchIcon />} name="cmake_generic" type="Windows Batch File" size="2.77 KB" spacing="tracking-[-0.33px]" typeSpacing="tracking-[-0.29px]" />
      <Tile icon={<TextIcon />} name="CMakeLists" type="Text Document" size="1.14 KB" active spacing="tracking-[-0.48px]" typeSpacing="tracking-[-0.47px]" />
      <Tile icon={<CppIcon />} name="main" type="C++ source file" size="13.3 KB" spacing="tracking-[-0.25px]" typeSpacing="tracking-[0.25px]" />
    </div>
  );
}

function StatusBar() {
  return (
    <div className="flex h-[46px] shrink-0 items-start whitespace-nowrap text-[23.5px] leading-[49px] text-[#1e395b]">
      <div className="ml-[28px] w-[98px] tracking-[-0.38px]">7 items</div>
      <div className="mt-[12px] h-[22px] w-[2px] bg-[#f3f3f3]" />
      <div className="ml-[21px] w-[176px] tracking-[-0.2px]">1 item selected</div>
      <div className="w-[99px] tracking-[-0.55px]">1.14 KB</div>
      <div className="mt-[12px] h-[22px] w-[2px] bg-[#f3f3f3]" />
      <div className="flex-1" />
      <div className="mt-[10px]"><DetailsIcon /></div>
      <svg className="ml-[16px] mr-[16px] mt-[12px]" width="28" height="21" viewBox="0 0 28 21">
        <rect x="0.500" y="0.500" width="27" height="20" fill="#fff" stroke="#999" />
        <Scene x="2" y="2" w="24" h="17" />
      </svg>
    </div>
  );
}

/* Slivers of the window lying behind, visible along the left and top edges. */
function BackdropEdge() {
  return (
    <>
      <div className="absolute left-0 top-0 flex h-[3px] w-[1750px]">
        <div className="w-[170px] bg-[#e3e3e3]" />
        <div className="w-[2px] bg-[#bdbdbd]" />
        <div className="w-[141px] bg-[#d4d4d4]" />
        <div className="w-[2px] bg-[#bdbdbd]" />
        <div className="w-[11px] bg-[#d4d4d4]" />
        <div className="w-[2px] bg-[#bdbdbd]" />
        <div className="w-[340px] bg-[#d0d0d0]" />
        <div className="flex-1 bg-[#e6e6e6]" />
      </div>
      <div className="absolute left-0 top-0 flex h-[980px] w-[9px] flex-col overflow-hidden bg-[#f3f3f3] text-[22px] font-medium text-[#666]">
        <div className="h-[27px] bg-[#dcdcdc]" />
        <div className="h-[98px] bg-[#f5f5f5]" />
        <div className="h-[3px] bg-[#5fa3d8]" />
        <div className="h-[82px] bg-[#f7f7f7]" />
        <div className="h-[12px] border-y border-[#e0e0e0] bg-[#f0f0f0]" />
        <div className="h-[63px] bg-[#efefef] leading-[32px] blur-[0.6px]"><span className="-ml-[6px]">ic</span></div>
        <div className="h-[32px] border-y-2 border-[#a9cdec] bg-[#c2d9f0]" />
        <div className="h-[46px] bg-[#eff0f1]" />
        <div className="h-[44px] border-y border-[#dedede] bg-[#f2f2f2] font-bold leading-[46px] blur-[0.6px]"><span className="-ml-[2px]">iy</span></div>
        <div className="h-[485px] bg-[#f3f3f3]" />
        <div className="h-[2px] bg-[#a9cdec]" />
        <div className="h-[72px] bg-[#f3f3f3]" />
        <div className="flex-1 bg-[#dcdcdc]" />
      </div>
    </>
  );
}

export default function App() {
  return (
    <div className="relative h-[980px] w-[1750px] overflow-hidden bg-[#d9d9d9] pl-[9px] pt-[3px] font-['Open_Sans','Noto_Sans',sans-serif]">
      <Defs />
      <BackdropEdge />
      <div className="relative flex h-[973px] w-[1739px] flex-col border-2 border-[#1b80d6] bg-white shadow-[0_0_8px_rgba(0,0,0,0.45)]">
        <TitleBar />
        <Tabs />
        <Ribbon />
        <AddressRow />
        <div className="flex h-[558px] shrink-0">
          <Sidebar />
          <ScrollBar />
          <div className="ml-[3px] w-[2px] shrink-0 bg-[#f5f5f5]" />
          <Files />
        </div>
        <StatusBar />
      </div>
    </div>
  );
}
